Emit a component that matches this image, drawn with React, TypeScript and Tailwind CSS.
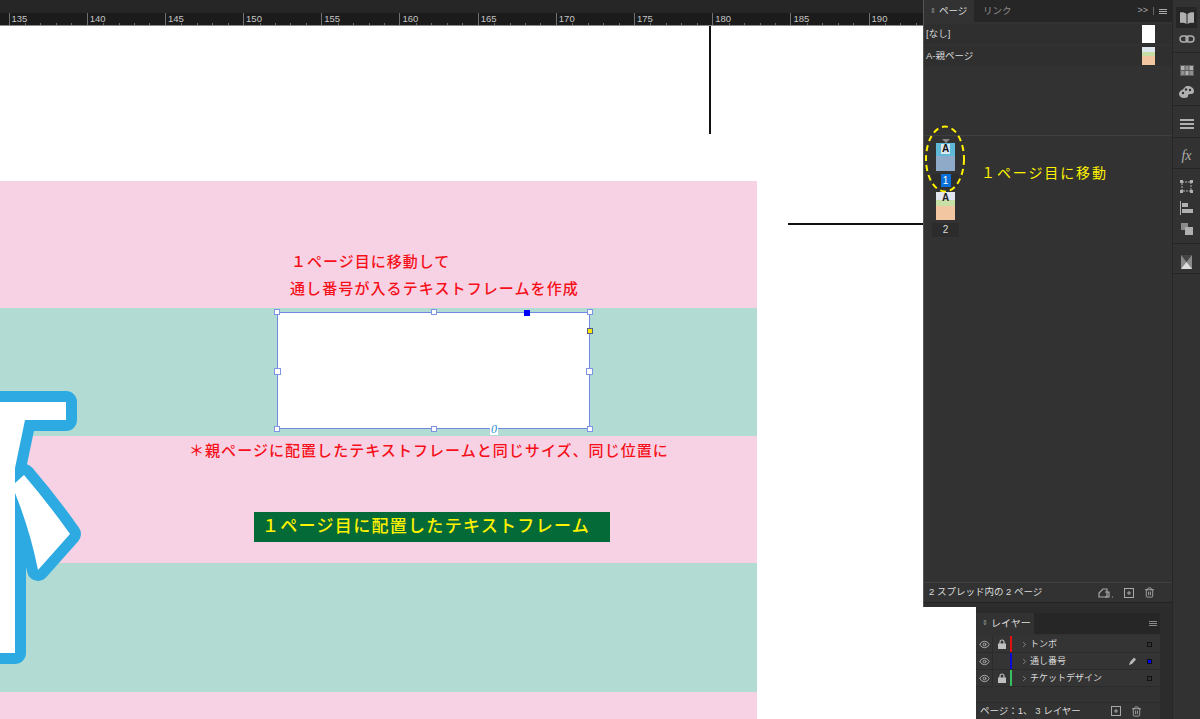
import type { ReactNode } from "react"
import { ChevronRight, Eye, Trash2 } from "lucide-react"

const jp = "font-['Liberation_Sans','Noto_Sans_CJK_JP',sans-serif]"
const marks = [130, 135, 140, 145, 150, 155, 160, 165, 170, 175, 180, 185, 190]

function Ruler() {
  return (
    <div className="box-content flex h-[12px] w-[923px] overflow-hidden border-b border-b-[#8a8a8a] bg-[#1b1b1b]">
      <div className="flex shrink-0 -ml-[69.7px]">
        {marks.map((m) => (
          <div key={m} className="relative flex h-[12px] w-[78.2px] shrink-0 items-end border-l border-[#707070]">
            {m > 130 && <span className="absolute left-[2px] top-[-1px] text-[9.5px] leading-[13px] text-[#c4c4c4]">{m}</span>}
            {[0, 1, 2, 3, 4].map((t) => (
              <div key={t} className={t === 0 ? "h-[2px] w-1/5" : "h-[2px] w-1/5 border-l border-[#6a6a6a]"} />
            ))}
          </div>
        ))}
      </div>
    </div>
  )
}

function Blob() {
  const a = "M-20 402H66V420H25L15 468V653H-20Z"
  const b = "M24 475Q48 503 70 534L38 570Q30 530 15 493L14 484Z"
  return (
    <svg className="absolute left-0 top-[339px]" width="100" height="310" viewBox="0 365 100 310">
      <path d={a} fill="#2eaae2" stroke="#2eaae2" strokeWidth="22" strokeLinejoin="round" />
      <path d={b} fill="#2eaae2" stroke="#2eaae2" strokeWidth="22" strokeLinejoin="round" />
      <path d={a} fill="#fff" />
      <path d={b} fill="#fff" />
    </svg>
  )
}

function Handle({ className }: { className: string }) {
  return <div className={"absolute h-[6px] w-[6px] border border-[#7f95e4] bg-white " + className} />
}

function Canvas() {
  return (
    <div className={"relative flex-1 overflow-hidden bg-white " + jp}>
      {/* トンボ */}
      <div className="absolute left-[709px] top-0 h-[108px] w-[2px] bg-[#111]" />
      <div className="absolute left-[788px] top-[197px] h-[2px] w-[135px] bg-[#111]" />

      <div className="mt-[155px] w-[757px]">
        <div className="h-[127px] bg-[#f7d2e4]" />
        <div className="h-[128px] bg-[#b2dcd3]" />
        <div className="h-[127px] bg-[#f7d2e4]" />
        <div className="h-[129px] bg-[#b2dcd3]" />
        <div className="h-[27px] bg-[#f7d2e4]" />
      </div>

      <Blob />

      <div className="absolute left-[291px] top-[226px] text-[15px] font-medium leading-[20px] tracking-[1px] text-[#f5101a]">
        １ページ目に移動して
      </div>
      <div className="absolute left-[290px] top-[253px] text-[15px] font-medium leading-[20px] tracking-[1.1px] text-[#f5101a]">
        通し番号が入るテキストフレームを作成
      </div>

      {/* 選択中のフレーム */}
      <div className="absolute left-[277px] top-[286px] h-[117px] w-[313px] border border-[#6f8ade] bg-white">
        <Handle className="left-[-4px] top-[-4px]" />
        <Handle className="left-[153px] top-[-4px]" />
        <Handle className="right-[-4px] top-[-4px]" />
        <Handle className="left-[-4px] top-[55px] h-[7px] w-[7px]" />
        <Handle className="right-[-4px] top-[55px] h-[7px] w-[7px]" />
        <Handle className="left-[-4px] bottom-[-4px]" />
        <Handle className="left-[153px] bottom-[-4px]" />
        <Handle className="right-[-4px] bottom-[-4px]" />
        <div className="absolute left-[246px] top-[-3px] h-[6px] w-[6px] bg-[#0000ff]" />
        <div className="absolute right-[-4px] top-[15px] h-[6px] w-[6px] border border-[#55608a] bg-[#ffe800]" />
        <div className="absolute bottom-[-7px] left-[212px] bg-white px-[1px] font-['Liberation_Serif',serif] text-[12px] italic leading-[12px] text-[#2a8fd0]">0</div>
      </div>

      <div className="absolute left-[189px] top-[415px] text-[15px] font-medium leading-[20px] tracking-[1.05px] text-[#f5101a]">
        ＊親ページに配置したテキストフレームと同じサイズ、同じ位置に
      </div>

      <div className="absolute left-[254px] top-[486px] flex h-[30px] w-[356px] items-center bg-[#046a38] pl-[8px] text-[17px] font-medium tracking-[1.3px] text-[#fff200]">
        １ページ目に配置したテキストフレーム
      </div>
    </div>
  )
}

function Thumb({ kind }: { kind: "blue" | "peach" }) {
  if (kind === "blue") {
    return (
      <div className="relative flex h-[28px] w-[19px] flex-col bg-[#74b3dc]">
        <div className="h-[13px] bg-[#5fb9d6]" />
        <div className="flex-1 bg-[#8fa9c9]" />
        <span className="absolute left-[5px] top-[1px] w-[9px] bg-[#d8e6ee] text-center font-['Liberation_Sans',sans-serif] text-[10px] font-bold leading-[10px] text-[#111]">A</span>
      </div>
    )
  }
  return (
    <div className="relative flex h-[28px] w-[19px] flex-col bg-[#e4e8ee]">
      <div className="h-[8px] bg-[#e2e6ee]" />
      <div className="h-[6px] bg-[#c8dfa5]" />
      <div className="flex-1 bg-[#f3c6a2]" />
      <span className="absolute left-[5px] top-[1px] w-[9px] text-center font-['Liberation_Sans',sans-serif] text-[10px] font-bold leading-[10px] text-[#222]">A</span>
    </div>
  )
}

function PagesPanel() {
  return (
    <div className={"relative flex h-[607px] flex-col border-l border-[#555] bg-[#323232] text-[#dcdcdc] " + jp}>
      <div className="flex h-[22px] items-center bg-[#262626]">
        <div className="flex h-full w-[50px] items-center gap-[3px] bg-[#323232] pl-[6px] text-[9.5px]">
          <span className="text-[7px] text-[#999]">⇕</span>ページ
        </div>
        <span className="ml-[9px] text-[9.5px] text-[#8e8e8e]">リンク</span>
        <div className="ml-auto mr-[5px] flex items-center gap-[5px] text-[9px] text-[#aaa]">
          <span>&gt;&gt;</span>
          <div className="h-[8px] w-px bg-[#666]" />
          <div className="flex w-[8px] flex-col gap-px">
            <div className="h-px bg-[#aaa]" />
            <div className="h-px bg-[#aaa]" />
            <div className="h-px bg-[#aaa]" />
          </div>
        </div>
      </div>

      <div className="flex h-[114px] flex-col border-b border-[#3f3f3f] pt-[2px]">
        <div className="flex h-[20px] items-center justify-between bg-[#2f2f2f] pl-[2px] pr-[17px] text-[9.5px]">
          [なし]
          <div className="h-[18px] w-[13px] bg-white" />
        </div>
        <div className="mt-[2px] flex h-[20px] items-center justify-between bg-[#2f2f2f] pl-[2px] pr-[17px] text-[9.5px]">
          A-親ページ
          <div className="flex h-[18px] w-[13px] flex-col bg-[#dfe6ee]">
            <div className="h-[5px]" />
            <div className="h-[4px] bg-[#c7dfa4]" />
            <div className="flex-1 bg-[#f3c6a2]" />
          </div>
        </div>
      </div>

      <div className="relative flex flex-1 flex-col pl-[12px] pt-[3px]">
        <div className="ml-[6px] h-0 w-0 border-x-[4px] border-t-[4px] border-x-transparent border-t-[#888]" />
        <Thumb kind="blue" />
        <div className="mt-[3px] flex h-[13px] w-[27px] -ml-[4px] justify-center bg-[#2c2c2c]">
          <span className="w-[10px] bg-[#0a6fd8] text-center text-[10px] leading-[13px] text-white">1</span>
        </div>
        <div className="h-[5px]" />
        <Thumb kind="peach" />
        <div className="mt-[3px] flex h-[14px] w-[27px] -ml-[4px] justify-center bg-[#2c2c2c] text-[10px] leading-[14px]">2</div>

        <div className="absolute left-[57px] top-[27px] text-[14px] leading-[20px] tracking-[1.9px] text-[#fff200]">
          １ページ目に移動
        </div>
      </div>

      <div className="flex h-[20px] items-center border-t border-[#3f3f3f] pl-[5px] pr-[17px] text-[9.5px]">
        2 スプレッド内の 2 ページ
        <div className="ml-auto flex items-center gap-[10px] text-[#a8a8a8]">
          <svg width="16" height="12" viewBox="0 0 16 12" fill="none" stroke="currentColor" strokeWidth="1.2">
            <path d="M1 10V6l4-4h4v8z" />
            <path d="M7 5h4v5H7" />
            <path d="M14 10h1" />
          </svg>
          <svg width="10" height="10" viewBox="0 0 10 10" fill="none" stroke="currentColor">
            <rect x=".5" y=".5" width="9" height="9" />
            <path d="M5 3v4M3 5h4" />
          </svg>
          <Trash2 size={11} />
        </div>
      </div>
      <div className="h-[5px] border-t border-[#222] bg-[#2e2e2e]" />

      <svg className="absolute left-0 top-[125px]" width="42" height="68" viewBox="0 0 42 68" fill="none">
        <ellipse cx="21" cy="34" rx="19" ry="32.5" stroke="#fff200" strokeWidth="2" strokeDasharray="6 4" />
      </svg>
    </div>
  )
}

function LayerRow({ color, name, locked, active }: { color: string; name: string; locked?: boolean; active?: boolean }) {
  return (
    <div className="flex h-[17px] items-center border-b border-[#2b2b2b] bg-[#343434] text-[9px] text-[#dcdcdc]">
      <div className="flex h-full w-[17px] items-center justify-center border-r border-[#2b2b2b]">
        <Eye size={11} className="text-[#b0b0b0]" />
      </div>
      <div className="flex h-full w-[17px] items-center justify-center">
        {locked && (
          <svg width="8" height="10" viewBox="0 0 8 10" fill="none">
            <path d="M2 5V3a2 2 0 0 1 4 0v2" stroke="#c0c0c0" strokeWidth="1.200" />
            <rect y="4.500" width="8" height="5.500" fill="#c0c0c0" />
          </svg>
        )}
      </div>
      <div className="h-full w-[2px]" style={{ backgroundColor: color }} />
      <ChevronRight size={9} className="ml-[8px] text-[#999]" />
      <span className="ml-[1px] pt-[2px]">{name}</span>
      <div className="ml-auto flex items-center">
        {active && (
          <svg width="10" height="10" viewBox="0 0 10 10" className="mr-[9px]">
            <path d="M1 9l1-3 4-4.500 2 2-4 4.500z" fill="#b8b8b8" />
          </svg>
        )}
        <div className={"mr-[8px] h-[5px] w-[5px] border border-[#111] " + (active ? "bg-[#0000ff]" : "bg-[#333]")} />
      </div>
    </div>
  )
}

function LayersPanel() {
  return (
    <div className={"flex flex-1 " + jp}>
      <div className="flex flex-1 flex-col bg-[#323232]">
        <div className="h-[6px] bg-[#2b2b2b]" />
        <div className="flex h-[21px] shrink-0 items-center bg-[#262626]">
          <div className="flex h-full w-[58px] items-center gap-[3px] whitespace-nowrap bg-[#323232] pl-[6px] text-[10px] text-[#dcdcdc]">
            <span className="text-[7px] text-[#999]">⇕</span>レイヤー
          </div>
          <div className="ml-auto mr-[3px] flex w-[8px] flex-col gap-px">
            <div className="h-px bg-[#888]" />
            <div className="h-px bg-[#888]" />
            <div className="h-px bg-[#888]" />
          </div>
        </div>
        <div className="pt-[2px]">
          <LayerRow color="#e01010" name="トンボ" locked />
          <LayerRow color="#0b0bd8" name="通し番号" active />
          <LayerRow color="#36c060" name="チケットデザイン" locked />
        </div>
        <div className="mt-auto flex h-[17px] items-center whitespace-nowrap border-t border-[#2b2b2b] pl-[4px] text-[9.5px] text-[#dcdcdc]">
          ページ：1、 3 レイヤー
          <div className="ml-auto mr-[18px] flex items-center gap-[10px] text-[#a8a8a8]">
            <svg width="10" height="10" viewBox="0 0 10 10" fill="none" stroke="currentColor">
              <rect x=".5" y=".5" width="9" height="9" />
              <path d="M5 3v4M3 5h4" />
            </svg>
            <Trash2 size={11} />
          </div>
        </div>
      </div>
      <div className="w-[12px] bg-[#2c2c2c]" />
    </div>
  )
}

function ToolIcon({ children, active }: { children: ReactNode; active?: boolean }) {
  return (
    <div className={"mx-auto flex h-[21px] w-[21px] items-center justify-center text-[#b0b0b0] " + (active ? "bg-[#262626]" : "")}>
      {children}
    </div>
  )
}

function ToolGroup({ children, className }: { children: ReactNode; className: string }) {
  return <div className={"border-b border-[#262626] pt-[7px] " + className}>{children}</div>
}

function IconStrip() {
  return (
    <div className="flex h-[719px] w-[28px] shrink-0 flex-col border-l border-[#262626] bg-[#323232]">
      <ToolGroup className="h-[53px]">
        <ToolIcon active>
          <svg width="16" height="14" viewBox="0 0 16 14" fill="currentColor">
            <path d="M7.500 3C6 1.500 3 1 1 1.500V12c2-.5 5 0 6.500 1zM8.500 3C10 1.500 13 1 15 1.500V12c-2-.5-5 0-6.500 1z" />
          </svg>
        </ToolIcon>
        <ToolIcon>
          <svg width="16" height="10" viewBox="0 0 16 10" fill="none" stroke="currentColor" strokeWidth="1.400">
            <rect x="1" y="2" width="8" height="6" rx="3" />
            <rect x="7" y="2" width="8" height="6" rx="3" />
          </svg>
        </ToolIcon>
      </ToolGroup>
      <ToolGroup className="h-[53px]">
        <ToolIcon>
          <svg width="14" height="11" viewBox="0 0 14 11" fill="currentColor">
            <rect width="14" height="11" opacity=".35" />
            <rect x="1" y="1" width="3.500" height="4" /><rect x="5.500" y="1" width="3" height="4" opacity=".6" /><rect x="9.500" y="1" width="3.500" height="4" />
            <rect x="1" y="6" width="3.500" height="4" opacity=".6" /><rect x="5.500" y="6" width="3" height="4" /><rect x="9.500" y="6" width="3.500" height="4" opacity=".6" />
          </svg>
        </ToolIcon>
        <ToolIcon>
          <svg width="15" height="12" viewBox="0 0 15 12" fill="currentColor">
            <path d="M8 0c4 0 7 2 7 5s-2 3-4 3-2 1-2 2-1 2-4 2-5-2-5-4 1-3 3-4 3-4 5-4z" />
            <circle cx="4" cy="7" r="1.200" fill="#323232" /><circle cx="7" cy="3.500" r="1.200" fill="#323232" /><circle cx="11" cy="4" r="1.200" fill="#323232" />
          </svg>
        </ToolIcon>
      </ToolGroup>
      <ToolGroup className="h-[32px]">
        <ToolIcon>
          <div className="flex w-[14px] flex-col gap-[2px]">
            <div className="h-[2px] bg-[#b0b0b0]" />
            <div className="h-[2px] bg-[#b0b0b0]" />
            <div className="h-[2px] bg-[#b0b0b0]" />
          </div>
        </ToolIcon>
      </ToolGroup>
      <ToolGroup className="h-[31px]">
        <ToolIcon>
          <span className="font-['Liberation_Serif',serif] text-[14px] italic leading-none">fx</span>
        </ToolIcon>
      </ToolGroup>
      <ToolGroup className="h-[75px]">
        <ToolIcon>
          <svg width="13" height="13" viewBox="0 0 13 13" fill="currentColor">
            <path d="M2 2h9v9H2z" fill="none" stroke="currentColor" strokeDasharray="2 1" />
            <rect width="3" height="3" /><rect x="10" width="3" height="3" /><rect y="10" width="3" height="3" /><rect x="10" y="10" width="3" height="3" />
          </svg>
        </ToolIcon>
        <ToolIcon>
          <svg width="13" height="14" viewBox="0 0 13 14" fill="currentColor">
            <rect width="1" height="14" /><rect x="2" y="2" width="6" height="4" /><rect x="2" y="8" width="11" height="4" />
          </svg>
        </ToolIcon>
        <ToolIcon>
          <svg width="12" height="12" viewBox="0 0 12 12" fill="currentColor">
            <rect width="7" height="7" opacity=".7" /><rect x="4" y="4" width="8" height="8" />
          </svg>
        </ToolIcon>
      </ToolGroup>
      <ToolGroup className="h-[30px]">
        <ToolIcon>
          <svg width="11" height="14" viewBox="0 0 11 14">
            <rect width="11" height="14" fill="#8a8a8a" />
            <path d="M0 0l5.500 7L11 0z" fill="#444" />
            <path d="M0 14l5.500-7 5.500 7z" fill="#ddd" />
          </svg>
        </ToolIcon>
      </ToolGroup>
    </div>
  )
}

export default function App() {
  return (
    <div className="flex h-[719px] w-[1200px] overflow-hidden bg-white font-['Liberation_Sans',sans-serif]">
      <div className="flex h-full w-[923px] shrink-0 flex-col">
        <div className="h-[13px] bg-[#262626]" />
        <Ruler />
        <Canvas />
      </div>
      <div className="flex h-full w-[249px] shrink-0 flex-col">
        <PagesPanel />
        <div className="flex flex-1">
          <div className="w-[53px] bg-white" />
          <LayersPanel />
        </div>
      </div>
      <IconStrip />
    </div>
  )
}
